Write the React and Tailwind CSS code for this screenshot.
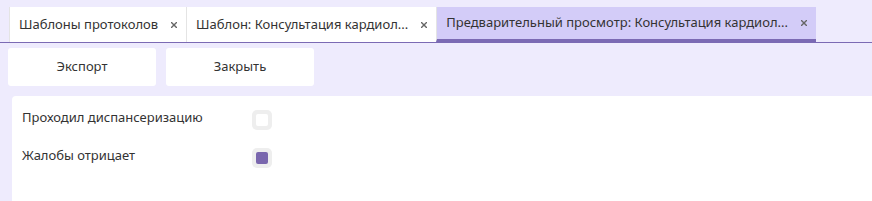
import React, { useState } from 'react';

const tabs = [
    { title: 'Шаблоны протоколов' },
    { title: 'Шаблон: Консультация кардиол...' },
    { title: 'Предварительный просмотр: Консультация кардиол...', active: true },
];

const CloseIcon = () => (
    <svg width="6" height="6" viewBox="0 0 6 6" className="shrink-0">
        <path d="M0.5 0.5 L5.5 5.5 M5.5 0.5 L0.5 5.5" stroke="#666666" strokeWidth="1.4" strokeLinecap="square" />
    </svg>
);

const Checkbox = ({ checked, onChange }) => (
    <button
        onClick={onChange}
        className="flex items-center justify-center w-[20px] h-[20px] rounded-[5px] bg-[#eeeeee]"
    >
        <span className={`block w-[12px] h-[12px] rounded-[2px] ${checked ? 'bg-[#7a67ae]' : 'bg-white'}`} />
    </button>
);

const App = () => {
    const [values, setValues] = useState({ exam: false, complaints: true });

    const toggle = (key) => setValues({ ...values, [key]: !values[key] });

    return (
        <div className="flex flex-col h-[201px] bg-[#eeebfd] text-[13px] text-[#333333] overflow-hidden" style={{ fontFamily: '"Segoe UI", "Noto Sans", sans-serif' }}>
            {/* Tabs */}
            <div className="flex pl-[9px] pt-[7px] border-b border-[#7b6ab4]">
                {tabs.map((tab) => (
                    <div
                        key={tab.title}
                        className={`flex items-center h-[35px] pl-[9px] pr-[9px] gap-[13px] border-l border-[#e4e4e4] whitespace-nowrap ${tab.active ? 'bg-[#d3ccf8] border-b-[3px] border-b-[#7b6ab4]' : 'bg-white'}`}
                    >
                        <span>{tab.title}</span>
                        <CloseIcon />
                    </div>
                ))}
            </div>

            {/* Buttons */}
            <div className="flex gap-[10px] pl-[8px] mt-[5px]">
                <button className="w-[148px] h-[38px] bg-white rounded-[3px]">Экспорт</button>
                <button className="w-[148px] h-[38px] bg-white rounded-[3px]">Закрыть</button>
            </div>

            {/* Form */}
            <div className="flex-1 ml-[12px] mt-[10px] bg-white rounded-tl-[4px] pl-[10px] pt-[14px] flex flex-col gap-[18px]">
                <div className="flex items-start">
                    <span className="w-[230px] leading-[14px]">Проходил диспансеризацию</span>
                    <Checkbox checked={values.exam} onChange={() => toggle('exam')} />
                </div>
                <div className="flex items-start">
                    <span className="w-[230px] leading-[14px]">Жалобы отрицает</span>
                    <Checkbox checked={values.complaints} onChange={() => toggle('complaints')} />
                </div>
            </div>
        </div>
    );
};

export default App;
